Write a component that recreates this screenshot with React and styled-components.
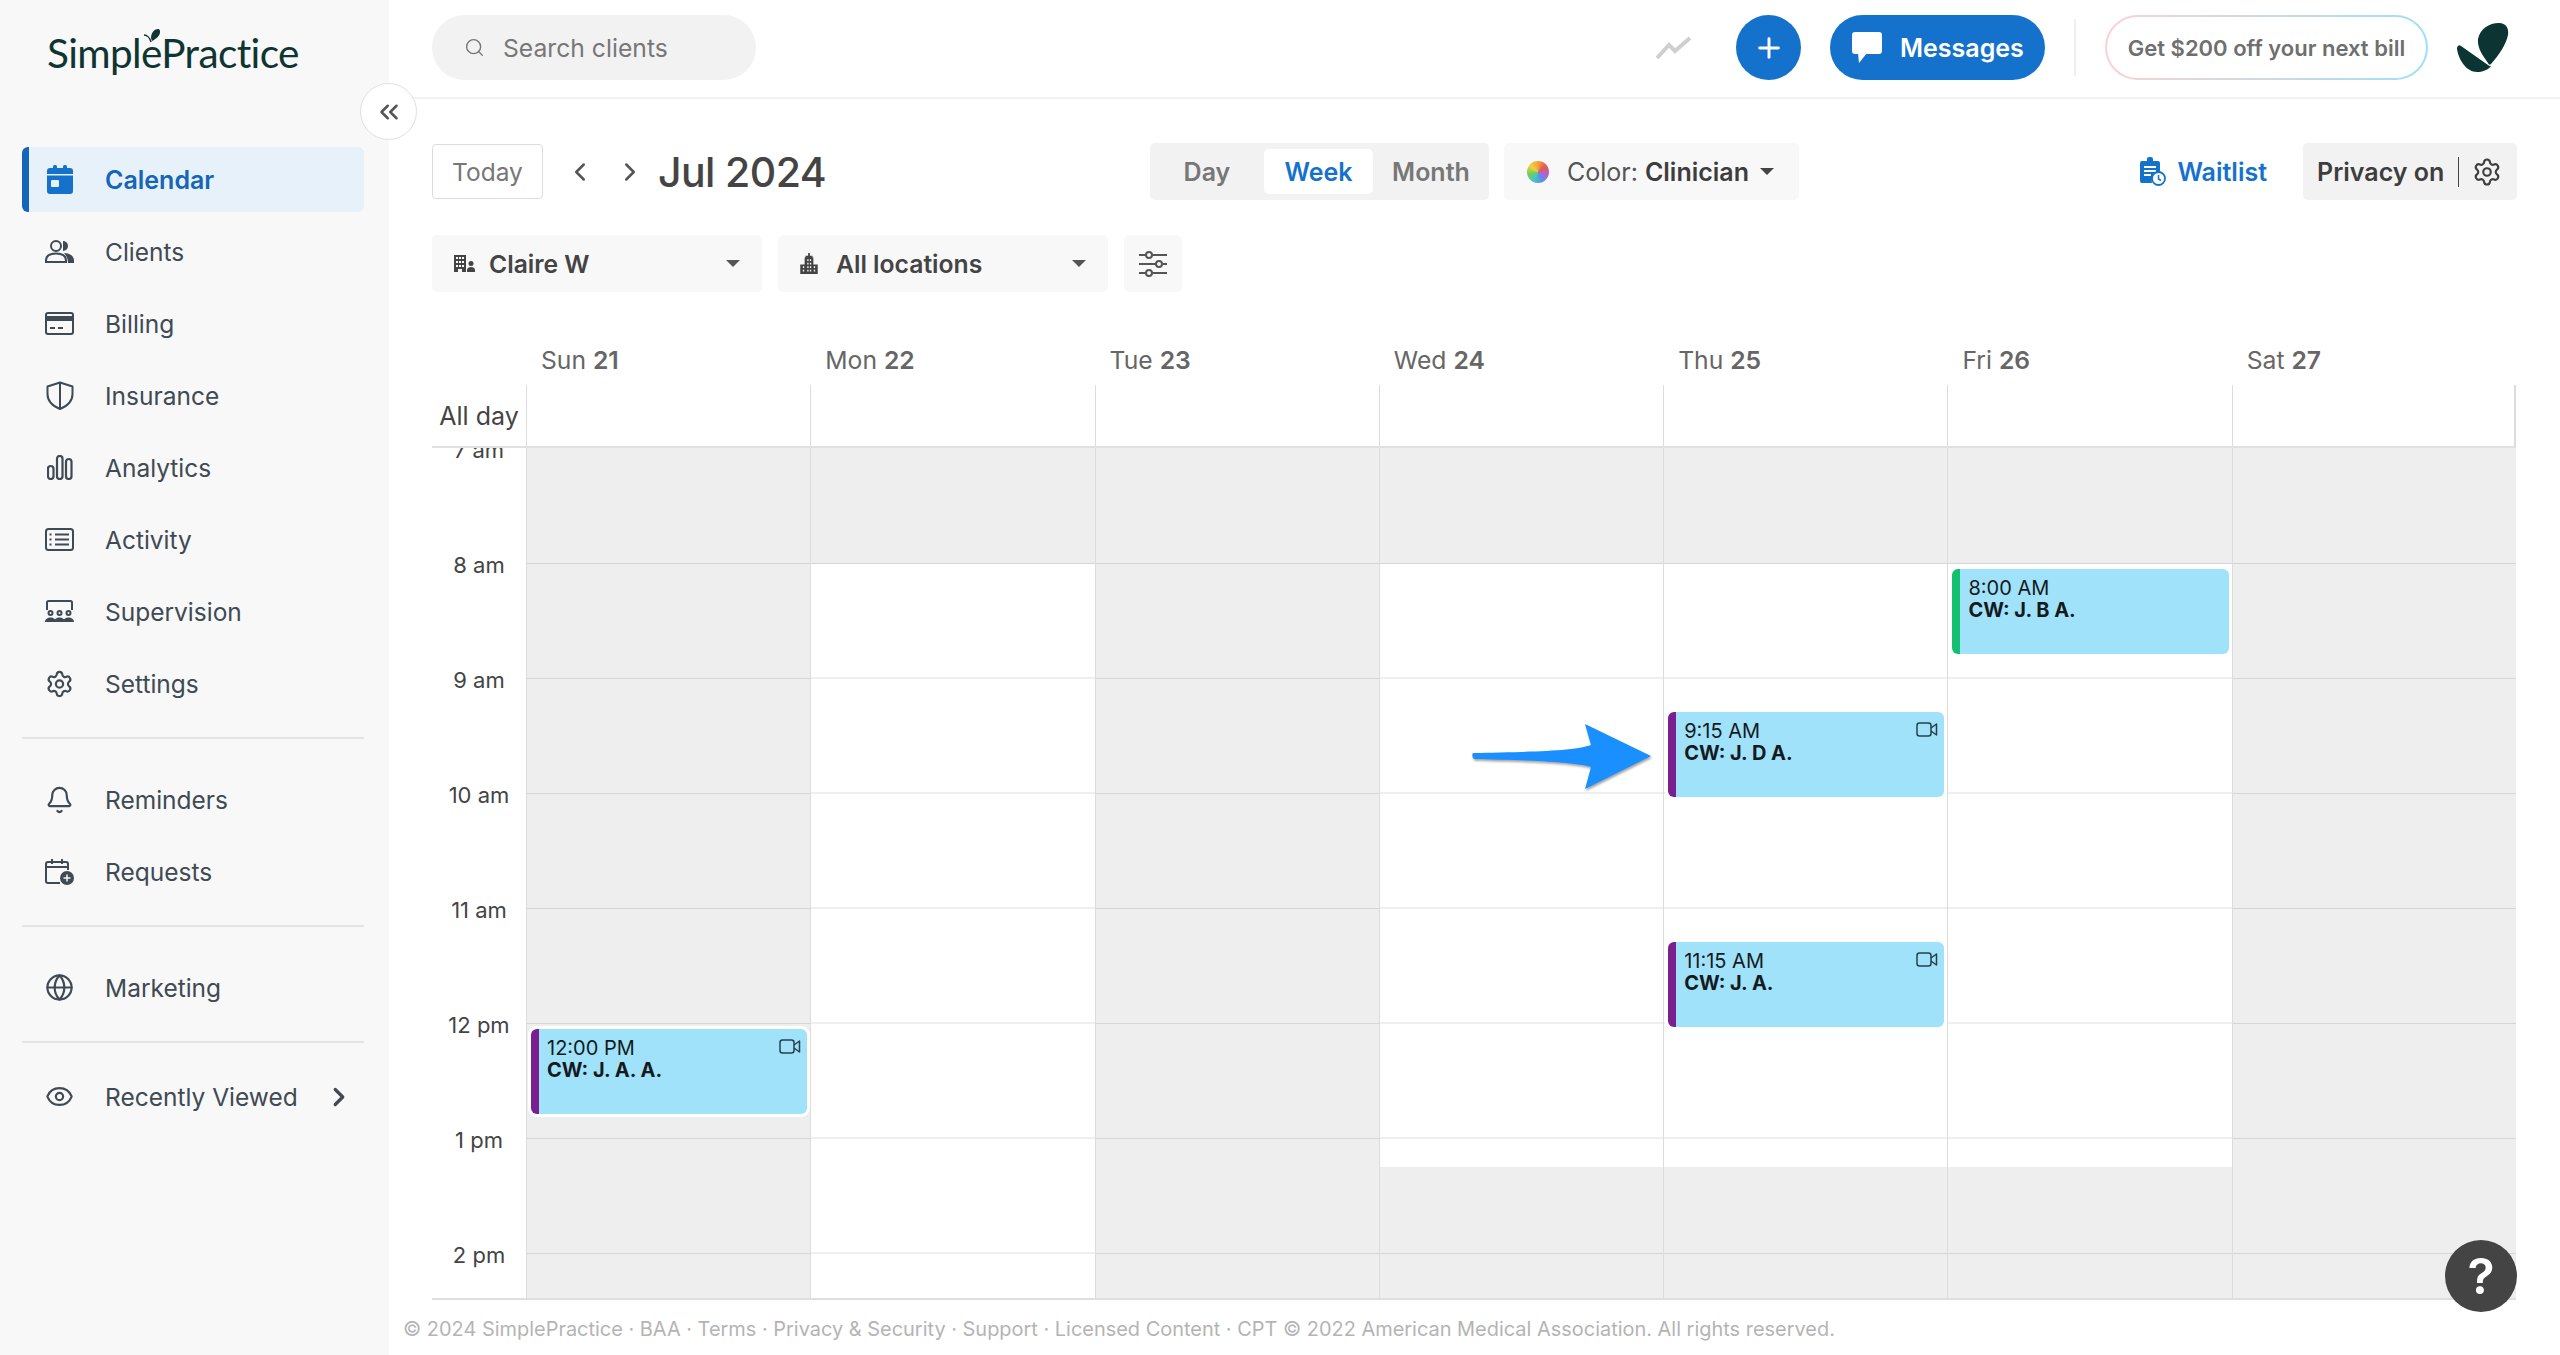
import React from "react";
import styled, { createGlobalStyle } from "styled-components";
import {
  Bell,
  ChevronLeft,
  ChevronRight,
  ChevronsLeft,
  Eye,
  Globe,
  Plus,
  Search,
  Settings,
} from "lucide-react";

const GlobalStyle = createGlobalStyle`
  html, body {
    margin: 0;
    padding: 0;
    height: 100%;
    background: #fff;
    font-family: Inter, "Liberation Sans", sans-serif;
  }
  * { box-sizing: border-box; }
`;

/* ---------- icons ---------- */
const CalendarIcon = () => (
  <svg width="26" height="29" viewBox="0 0 26 29" fill="#1572cc">
    <rect x="6" y="0" width="4" height="6" rx="1.5" />
    <rect x="16" y="0" width="4" height="6" rx="1.5" />
    <path d="M0 6a3 3 0 0 1 3-3h20a3 3 0 0 1 3 3v3H0z" />
    <path d="M0 10.500h26V26a3 3 0 0 1-3 3H3a3 3 0 0 1-3-3z" />
    <rect x="4" y="15" width="8" height="7" rx="1" fill="#e7f1fa" />
  </svg>
);
const ClientsIcon = () => (
  <svg width="29" height="23" viewBox="0 0 29 23" fill="none" stroke="#3f4a54" strokeWidth="2">
    <circle cx="11" cy="6" r="5" />
    <path d="M1 22v-1.500C1 16 5 13.500 11 13.500s10 2.500 10 7V22z" />
    <path d="M18 1a5 5 0 0 1 0 10z" fill="#3f4a54" stroke="none" />
    <path d="M19 13c5 0 10 2.500 10 7.500V23h-6c0-4-1.500-7.500-4-10z" fill="#3f4a54" stroke="none" />
  </svg>
);
const BillingIcon = () => (
  <svg width="29" height="23" viewBox="0 0 29 23" fill="none" stroke="#3f4a54" strokeWidth="2">
    <rect x="1" y="1" width="27" height="21" rx="2" />
    <rect x="1" y="4" width="27" height="5" fill="#3f4a54" stroke="none" />
    <path d="M5 16h5M13 16h5" />
  </svg>
);
const ShieldIcon = () => (
  <svg width="28" height="29" viewBox="0 0 28 29" fill="none" stroke="#3f4a54" strokeWidth="2">
    <path d="M14 1.500 26.500 5.500V13c0 7-5 12-12.500 15C6.500 25 1.500 20 1.500 13V5.500z" strokeLinejoin="round" />
    <path d="M14 1.500V28" />
  </svg>
);
const AnalyticsIcon = () => (
  <svg width="26" height="25" viewBox="0 0 26 25" fill="none" stroke="#3f4a54" strokeWidth="2.200">
    <rect x="1" y="11" width="5.500" height="13" rx="2.700" />
    <rect x="10" y="1" width="5.500" height="23" rx="2.700" />
    <rect x="19" y="4" width="5.500" height="20" rx="2.700" />
  </svg>
);
const ActivityIcon = () => (
  <svg width="29" height="23" viewBox="0 0 29 23" fill="none" stroke="#3f4a54" strokeWidth="2">
    <rect x="1" y="1" width="27" height="21" rx="2.500" />
    <path d="M10 6.500h14M10 11.500h14M10 16.500h14" />
    <path d="M4.500 6.500h2M4.500 11.500h2M4.500 16.500h2" />
  </svg>
);
const SupervisionIcon = () => (
  <svg width="29" height="23" viewBox="0 0 29 23" fill="none" stroke="#3f4a54" strokeWidth="2">
    <path d="M2 10V2.500A1.500 1.500 0 0 1 3.500 1h22A1.500 1.500 0 0 1 27 2.500V10" />
    <circle cx="5.500" cy="13" r="2" />
    <circle cx="14.500" cy="13" r="2" />
    <circle cx="23.500" cy="13" r="2" />
    <path d="M0 22c0-6 11-6 11 0zM9 22c0-6 11-6 11 0zM18 22c0-6 11-6 11 0z" fill="#3f4a54" stroke="none" />
  </svg>
);
const RequestsIcon = () => (
  <svg width="29" height="26" viewBox="0 0 29 26" fill="none" stroke="#3f4a54" strokeWidth="2">
    <path d="M7 0v5M17 0v5" />
    <path d="M15 24H3a2 2 0 0 1-2-2V5a2 2 0 0 1 2-2h18a2 2 0 0 1 2 2v6" />
    <path d="M1 8h22" />
    <circle cx="22" cy="19" r="7" fill="#3f4a54" stroke="none" />
    <path d="M22 15.500v7M18.500 19h7" stroke="#f8f8f8" strokeWidth="1.500" />
  </svg>
);
const VideoIcon = () => (
  <svg width="22" height="15" viewBox="0 0 22 15" fill="none" stroke="#27404d" strokeWidth="1.500">
    <rect x="1" y="1" width="14" height="13" rx="2.500" />
    <path d="M15 6 20.500 2V13L15 9" strokeLinejoin="round" />
  </svg>
);
const ChatIcon = () => (
  <svg width="30" height="31" viewBox="0 0 30 31" fill="#fff">
    <rect x="0" y="0" width="30" height="22" rx="3" />
    <path d="M6 21h9l-8 10z" />
  </svg>
);
const TrendIcon = () => (
  <svg width="36" height="24" viewBox="0 0 36 24" fill="none" stroke="#cfcfcf" strokeWidth="4">
    <path d="M1 22 13 9 19 15 34 2" />
  </svg>
);
const LogoMark = () => (
  <svg width="52" height="49" viewBox="0 0 52 49" fill="#0c3432">
    <path d="M21 16C23 6 32 0 42 0c7 0 10 5 9 12-2 9-8 19-17 29-1 1-2 1-3-1C26 33 20 25 21 16z" />
    <path d="M1 23c1-1 2-1 3 0l27 19c1 1 2 1 3 1-3 4-9 6-14 6C10 49 2 38 0 26c0-1 0-2 1-3z" />
  </svg>
);
const WaitlistIcon = () => (
  <svg width="26" height="29" viewBox="0 0 26 29">
    <path d="M2 4h5V2a2 2 0 0 1 2-2h2a2 2 0 0 1 2 2v2h5a2 2 0 0 1 2 2v10a8 8 0 0 0-8 10H2a2 2 0 0 1-2-2V6a2 2 0 0 1 2-2z" fill="#1572cc" />
    <path d="M4 10h12M4 14h12M4 18h7" stroke="#fff" strokeWidth="2" />
    <circle cx="18.500" cy="21.500" r="6.500" fill="#fff" stroke="#1572cc" strokeWidth="1.800" />
    <path d="M18.500 18v4l2.500 1.500" stroke="#1572cc" strokeWidth="1.500" fill="none" />
  </svg>
);
const BuildingUserIcon = () => (
  <svg width="21" height="17" viewBox="0 0 21 17" fill="#444">
    <path d="M0 0h12v17H8v-3H4v3H0z" />
    <path d="M2 2h2v2H2zM5 2h2v2H5zM8 2h2v2H8zM2 6h2v2H2zM5 6h2v2H5zM8 6h2v2H8zM2 10h2v2H2zM5 10h2v2H5zM8 10h2v2H8z" fill="#f8f8f8" />
    <circle cx="17" cy="8.500" r="2.500" />
    <path d="M13 17v-2c0-2 2-3 4-3s4 1 4 3v2z" />
  </svg>
);
const BuildingsIcon = () => (
  <svg width="18" height="21" viewBox="0 0 20 24" fill="#444">
    <path d="M6 5V3h3V0h2v3h3v2h1v8h5v11H0V13h5V5z" />
    <path d="M8 7h1.500v2H8zM11 7h1.500v2H11zM8 11h1.500v2H8zM11 11h1.500v2H11zM3 15h1.500v2H3zM8 15h1.500v2H8zM11 15h1.500v2H11zM15.500 15H17v2h-1.500zM3 19h1.500v2H3zM8 19h1.500v2H8zM11 19h1.500v2H11zM15.500 19H17v2h-1.500z" fill="#f8f8f8" />
  </svg>
);
const SlidersIcon = () => (
  <svg width="28" height="26" viewBox="0 0 28 26" fill="none" stroke="#555" strokeWidth="2">
    <path d="M0 4h7M13 4h15M0 13h17M23 13h5M0 22h7M13 22h15" />
    <circle cx="10" cy="4" r="3" />
    <circle cx="20" cy="13" r="3" />
    <circle cx="10" cy="22" r="3" />
  </svg>
);

/* ---------- sidebar ---------- */
const Page = styled.div`
  display: flex;
  width: 100%;
  height: 100vh;
  overflow: hidden;
  position: relative;
`;
const Sidebar = styled.aside`
  width: 389px;
  flex-shrink: 0;
  background: #f8f8f8;
  padding: 0 25px 0 22px;
  display: flex;
  flex-direction: column;
`;
const LogoWrap = styled.div`
  height: 147px;
  flex-shrink: 0;
  padding: 31px 0 0 25px;
`;
const Logo = styled.div`
  position: relative;
  display: inline-block;
  font-family: Lato, sans-serif;
  font-size: 40.500px;
  line-height: 44px;
  letter-spacing: -0.6px;
  color: #0f3533;
`;
const LogoLeaf = styled.svg`
  position: absolute;
  left: 97px;
  top: -2px;
`;
const Nav = styled.nav`
  display: flex;
  flex-direction: column;
  gap: 7px;
`;
const NavItem = styled.div`
  height: 65px;
  display: flex;
  align-items: center;
  padding-left: 23px;
  border-radius: 6px;
  font-size: ${(p) => (p.$active ? "25px" : "24.500px")};
  font-weight: ${(p) => (p.$active ? 600 : 400)};
  color: ${(p) => (p.$active ? "#1565b8" : "#3f4a54")};
  background: ${(p) => (p.$active ? "#e7f1fa" : "transparent")};
  border-left: ${(p) => (p.$active ? "7px solid #1565b8" : "none")};
  ${(p) => p.$active && "padding-left: 16px;"}
`;
const NavIconBox = styled.span`
  width: 29px;
  display: flex;
  justify-content: center;
  margin-right: 31px;
  flex-shrink: 0;
  color: #3f4a54;
`;
const NavChevron = styled.span`
  margin-left: auto;
  margin-right: 10px;
  display: flex;
  color: #3f4a54;
`;
const Divider = styled.div`
  height: 2px;
  background: #e4e4e4;
  margin: 14px 0 ${(p) => (p.$tail ? "14px" : "21px")};
`;
const CollapseBtn = styled.button`
  position: absolute;
  left: 360px;
  top: 83px;
  width: 57px;
  height: 57px;
  border-radius: 50%;
  background: #fff;
  border: 1px solid #e0e0e0;
  padding: 0;
  display: flex;
  align-items: center;
  justify-content: center;
  color: #555;
`;

/* ---------- main ---------- */
const Main = styled.main`
  flex: 1;
  min-width: 0;
  display: flex;
  flex-direction: column;
`;
const Topbar = styled.header`
  height: 99px;
  flex-shrink: 0;
  display: flex;
  align-items: flex-start;
  padding: 15px 51px 0 43px;
  border-bottom: 2px solid #f2f2f2;
`;
const SearchBox = styled.div`
  width: 324px;
  height: 65px;
  border-radius: 33px;
  background: #f2f2f2;
  display: flex;
  align-items: center;
  padding-left: 32px;
  gap: 18px;
  color: #777;
  font-size: 24.700px;
`;
const TopRight = styled.div`
  margin-left: auto;
  display: flex;
  align-items: center;
  height: 65px;
`;
const TrendWrap = styled.span`
  display: flex;
  margin-right: 44px;
`;
const RoundPlus = styled.div`
  width: 65px;
  height: 65px;
  border-radius: 50%;
  background: #1572cc;
  color: #fff;
  display: flex;
  align-items: center;
  justify-content: center;
`;
const MessagesBtn = styled.div`
  width: 215px;
  height: 65px;
  margin-left: 29px;
  border-radius: 33px;
  background: #1572cc;
  color: #fff;
  font-size: 25px;
  font-weight: 600;
  display: flex;
  align-items: center;
  padding-left: 22px;
  gap: 18px;
`;
const TopDivider = styled.div`
  width: 2px;
  height: 57px;
  background: #efefef;
  margin: 0 29px;
`;
const PromoBtn = styled.div`
  width: 323px;
  height: 65px;
  border-radius: 33px;
  border: 2px solid transparent;
  background: linear-gradient(#fff, #fff) padding-box,
    linear-gradient(90deg, #fbd2d2, #9fe0f6) border-box;
  color: #6f6f6f;
  font-size: 22px;
  font-weight: 600;
  display: flex;
  align-items: center;
  justify-content: center;
`;
const MarkWrap = styled.span`
  display: flex;
  margin-left: 29px;
`;

const Content = styled.div`
  flex: 1;
  min-height: 0;
  padding: 0 43px;
  display: flex;
  flex-direction: column;
`;
const ToolRow = styled.div`
  height: 57px;
  margin-top: 44px;
  display: flex;
  align-items: center;
  flex-shrink: 0;
`;
const TodayBtn = styled.div`
  width: 111px;
  height: 55px;
  border: 1px solid #dcdcdc;
  border-radius: 4px;
  display: flex;
  align-items: center;
  justify-content: center;
  font-size: 24.500px;
  color: #777;
`;
const ArrowBtn = styled.span`
  display: flex;
  color: #555;
  margin-left: ${(p) => p.$gap}px;
`;
const MonthTitle = styled.div`
  font-size: 41px;
  font-weight: 500;
  color: #444;
  margin-left: 13px;
  letter-spacing: -0.6px;
`;
const Segment = styled.div`
  width: 339px;
  height: 57px;
  margin-left: 324px;
  background: #f2f2f2;
  border-radius: 5px;
  display: flex;
  align-items: center;
`;
const SegItem = styled.div`
  height: 45px;
  width: ${(p) => p.$w}px;
  border-radius: 5px;
  display: flex;
  align-items: center;
  justify-content: center;
  font-size: 25px;
  font-weight: 600;
  color: ${(p) => (p.$active ? "#1572cc" : "#777")};
  background: ${(p) => (p.$active ? "#fff" : "transparent")};
`;
const ColorBtn = styled.div`
  width: 295px;
  height: 57px;
  margin-left: 15px;
  background: #f8f8f8;
  border-radius: 5px;
  display: flex;
  align-items: center;
  padding-left: 23px;
  font-size: 25px;
  color: #555;
`;
const ColorDot = styled.span`
  width: 22px;
  height: 22px;
  border-radius: 50%;
  margin-right: 18px;
  background: conic-gradient(#f2a33c, #e8574f, #b45fd0, #5a8fe6, #46c4c8, #6fcf5f, #f2d03c, #f2a33c);
`;
const Strong = styled.b`
  font-weight: 600;
  color: #3d3d3d;
  margin-left: 7px;
`;
const Caret = styled.span`
  width: 0;
  height: 0;
  border-left: 7px solid transparent;
  border-right: 7px solid transparent;
  border-top: 7px solid ${(p) => p.$color || "#444"};
  margin-left: ${(p) => (p.$auto ? "auto" : p.$ml + "px")};
  margin-right: ${(p) => p.$mr || 0}px;
`;
const WaitlistLink = styled.div`
  margin-left: auto;
  display: flex;
  align-items: center;
  gap: 11px;
  font-size: 25px;
  font-weight: 600;
  color: #1572cc;
`;
const PrivacyBtn = styled.div`
  width: 214px;
  height: 57px;
  margin-left: 36px;
  background: #f2f2f2;
  border-radius: 5px;
  display: flex;
  align-items: center;
  padding-left: 14px;
  font-size: 25px;
  font-weight: 600;
  color: #3d3d3d;
`;
const PrivacyRule = styled.span`
  width: 1px;
  height: 30px;
  background: #444;
  margin: 0 13px 0 14px;
`;
const FilterRow = styled.div`
  height: 57px;
  margin-top: 35px;
  display: flex;
  gap: 16px;
  flex-shrink: 0;
`;
const FilterSelect = styled.div`
  width: 330px;
  display: flex;
  align-items: center;
  background: #f8f8f8;
  border-radius: 5px;
  padding-left: 22px;
  font-size: 24.700px;
  font-weight: 600;
  color: #444;
`;
const FilterLabel = styled.span`
  margin-left: ${(p) => p.$ml}px;
`;
const FilterBtn = styled.div`
  width: 58px;
  display: flex;
  align-items: center;
  justify-content: center;
  background: #f8f8f8;
  border-radius: 5px;
`;

/* ---------- calendar ---------- */
const DayHeader = styled.div`
  display: grid;
  grid-template-columns: 94px repeat(7, 1fr);
  height: 93px;
  align-items: center;
  flex-shrink: 0;
  padding-top: 42px;
  margin-right: 1px;
`;
const DayLabel = styled.div`
  padding-left: 15px;
  font-size: 24.700px;
  color: #666;
  & b {
    font-weight: 600;
  }
`;
const AllDayRow = styled.div`
  display: grid;
  grid-template-columns: 94px repeat(7, 1fr);
  height: 63px;
  flex-shrink: 0;
  border-bottom: 2px solid #e0e0e0;
  margin-right: 1px;
`;
const AllDayLabel = styled.div`
  display: flex;
  align-items: center;
  justify-content: center;
  font-size: 25px;
  color: #444;
`;
const AllDayCell = styled.div`
  border-left: 1px solid #dcdcdc;
  &:last-child {
    border-right: 2px solid #dcdcdc;
  }
`;
const GridBody = styled.div`
  position: relative;
  display: grid;
  grid-template-columns: 94px repeat(7, 1fr);
  height: 852px;
  flex-shrink: 0;
  overflow: hidden;
  border-bottom: 2px solid #dedede;
  margin-right: 1px;
`;
const Gutter = styled.div`
  margin-top: -56px;
`;
const TimeLabel = styled.div`
  height: 115px;
  display: flex;
  align-items: center;
  justify-content: center;
  font-size: 22px;
  color: #444;
`;
const DayColumn = styled.div`
  position: relative;
  padding-top: 1px;
  border-left: 1px solid #dcdcdc;
  &:last-child {
    border-right: 2px solid #dcdcdc;
  }
  background: ${(p) =>
    p.$open
      ? `linear-gradient(#eee 0 ${p.$open[0]}px, #fff ${p.$open[0]}px ${p.$open[1]}px, #eee ${p.$open[1]}px)`
      : "#eee"};
`;
const HourCell = styled.div`
  height: 115px;
  border-bottom: ${(p) => (p.$light ? "2px solid #efefef" : "1px solid #d6d6d6")};
`;
const EventCard = styled.div`
  position: absolute;
  left: 4px;
  right: 3px;
  top: ${(p) => p.$top}px;
  height: 85px;
  display: flex;
  border-radius: 6px;
  background: #9fe2fa;
  border-left: 8px solid ${(p) => p.$accent};
  box-shadow: 0 0 0 3px #fff;
  padding: 8px 6px 0 8px;
  color: #151a1d;
  font-size: 20px;
  line-height: 22px;
  overflow: hidden;
`;
const EventText = styled.div`
  flex: 1;
`;
const EventName = styled.div`
  font-weight: 700;
`;
const EventVideo = styled.span`
  display: flex;
  margin-top: 2px;
`;
const BlueArrow = styled.svg`
  position: absolute;
  left: 1040px;
  top: 276px;
  filter: drop-shadow(1px 2px 1px rgba(0, 0, 0, 0.35));
  overflow: visible;
`;
const Footer = styled.footer`
  margin-left: -29px;
  padding-top: 17px;
  font-size: 19.950px;
  color: #b4b4b4;
  white-space: nowrap;
`;
const HelpBtn = styled.div`
  position: absolute;
  left: 2445px;
  top: 1240px;
  width: 72px;
  height: 72px;
  border-radius: 50%;
  background: #444;
  color: #fff;
  font-size: 50px;
  font-weight: 600;
  display: flex;
  align-items: center;
  justify-content: center;
`;

const navGroups = [
  [
    { label: "Calendar", icon: <CalendarIcon />, active: true },
    { label: "Clients", icon: <ClientsIcon /> },
    { label: "Billing", icon: <BillingIcon /> },
    { label: "Insurance", icon: <ShieldIcon /> },
    { label: "Analytics", icon: <AnalyticsIcon /> },
    { label: "Activity", icon: <ActivityIcon /> },
    { label: "Supervision", icon: <SupervisionIcon /> },
    { label: "Settings", icon: <Settings size={30} strokeWidth={1.8} /> },
  ],
  [
    { label: "Reminders", icon: <Bell size={30} strokeWidth={1.8} /> },
    { label: "Requests", icon: <RequestsIcon /> },
  ],
  [{ label: "Marketing", icon: <Globe size={31} strokeWidth={1.8} /> }],
];

const days = [
  { name: "Sun", num: 21, events: [{ top: 581, time: "12:00 PM", who: "CW: J. A. A.", accent: "#7a1f8f", video: true }] },
  { name: "Mon", num: 22, open: [116, 852] },
  { name: "Tue", num: 23 },
  { name: "Wed", num: 24, open: [116, 719] },
  {
    name: "Thu",
    num: 25,
    open: [116, 719],
    events: [
      { top: 264, time: "9:15 AM", who: "CW: J. D A.", accent: "#7a1f8f", video: true },
      { top: 494, time: "11:15 AM", who: "CW: J. A.", accent: "#7a1f8f", video: true },
    ],
  },
  {
    name: "Fri",
    num: 26,
    open: [116, 719],
    events: [{ top: 121, time: "8:00 AM", who: "CW: J. B A.", accent: "#12c06f" }],
  },
  { name: "Sat", num: 27 },
];

const hours = ["7 am", "8 am", "9 am", "10 am", "11 am", "12 pm", "1 pm", "2 pm"];

export default function App() {
  return (
    <Page>
      <GlobalStyle />
      <Sidebar>
        <LogoWrap>
          <Logo>
            SimplePractice
            <LogoLeaf width="16" height="14" viewBox="0 0 16 14" fill="#0f3533">
              <path d="M7 9C7 4 10 0 14 0c2 0 2 2 2 3 0 4-4 7-8 9z" />
              <path d="M0 6c3 0 6 3 7 7" fill="none" stroke="#0f3533" strokeWidth="1.500" />
            </LogoLeaf>
          </Logo>
        </LogoWrap>
        <Nav>
          {navGroups.map((group, i) => (
            <React.Fragment key={i}>
              {group.map((item) => (
                <NavItem key={item.label} $active={item.active}>
                  <NavIconBox>{item.icon}</NavIconBox>
                  {item.label}
                </NavItem>
              ))}
              <Divider $tail={i === navGroups.length - 1} />
            </React.Fragment>
          ))}
          <NavItem>
            <NavIconBox>
              <Eye size={31} strokeWidth={1.8} />
            </NavIconBox>
            Recently Viewed
            <NavChevron>
              <ChevronRight size={30} strokeWidth={2.6} />
            </NavChevron>
          </NavItem>
        </Nav>
      </Sidebar>
      <CollapseBtn>
        <ChevronsLeft size={30} strokeWidth={2} />
      </CollapseBtn>

      <Main>
        <Topbar>
          <SearchBox>
            <Search size={21} strokeWidth={1.6} />
            Search clients
          </SearchBox>
          <TopRight>
            <TrendWrap>
              <TrendIcon />
            </TrendWrap>
            <RoundPlus>
              <Plus size={32} strokeWidth={2.2} />
            </RoundPlus>
            <MessagesBtn>
              <ChatIcon />
              Messages
            </MessagesBtn>
            <TopDivider />
            <PromoBtn>Get $200 off your next bill</PromoBtn>
            <MarkWrap>
              <LogoMark />
            </MarkWrap>
          </TopRight>
        </Topbar>

        <Content>
          <ToolRow>
            <TodayBtn>Today</TodayBtn>
            <ArrowBtn $gap={22}>
              <ChevronLeft size={30} strokeWidth={2} />
            </ArrowBtn>
            <ArrowBtn $gap={20}>
              <ChevronRight size={30} strokeWidth={2} />
            </ArrowBtn>
            <MonthTitle>Jul 2024</MonthTitle>
            <Segment>
              <SegItem $w={114}>Day</SegItem>
              <SegItem $w={109} $active>
                Week
              </SegItem>
              <SegItem $w={116}>Month</SegItem>
            </Segment>
            <ColorBtn>
              <ColorDot />
              Color:<Strong>Clinician</Strong>
              <Caret $ml={11} />
            </ColorBtn>
            <WaitlistLink>
              <WaitlistIcon />
              Waitlist
            </WaitlistLink>
            <PrivacyBtn>
              Privacy on
              <PrivacyRule />
              <Settings size={30} strokeWidth={1.7} />
            </PrivacyBtn>
          </ToolRow>

          <FilterRow>
            <FilterSelect>
              <BuildingUserIcon />
              <FilterLabel $ml={14}>Claire W</FilterLabel>
              <Caret $auto $color="#555" $mr={22} />
            </FilterSelect>
            <FilterSelect>
              <BuildingsIcon />
              <FilterLabel $ml={18}>All locations</FilterLabel>
              <Caret $auto $color="#555" $mr={22} />
            </FilterSelect>
            <FilterBtn>
              <SlidersIcon />
            </FilterBtn>
          </FilterRow>

          <DayHeader>
            <span />
            {days.map((d) => (
              <DayLabel key={d.name}>
                {d.name} <b>{d.num}</b>
              </DayLabel>
            ))}
          </DayHeader>

          <AllDayRow>
            <AllDayLabel>All day</AllDayLabel>
            {days.map((d) => (
              <AllDayCell key={d.name} />
            ))}
          </AllDayRow>

          <GridBody>
            <Gutter>
              {hours.map((h) => (
                <TimeLabel key={h}>{h}</TimeLabel>
              ))}
            </Gutter>
            {days.map((d) => (
              <DayColumn key={d.name} $open={d.open}>
                {hours.map((h, i) => (
                  <HourCell
                    key={h}
                    $light={d.open && (i + 1) * 115 > d.open[0] && (i + 1) * 115 < d.open[1]}
                  />
                ))}
                {(d.events || []).map((e) => (
                  <EventCard key={e.time} $top={e.top} $accent={e.accent}>
                    <EventText>
                      <div>{e.time}</div>
                      <EventName>{e.who}</EventName>
                    </EventText>
                    {e.video && (
                      <EventVideo>
                        <VideoIcon />
                      </EventVideo>
                    )}
                  </EventCard>
                ))}
              </DayColumn>
            ))}
            <BlueArrow width="180" height="66" viewBox="0 0 180 66" fill="#1a8fff">
              <path d="M1 29C40 28 100 28 119 21L113 0 179 32 113 65 119 43C100 37 40 36 2 35 0 34 0 30 1 29z" />
            </BlueArrow>
          </GridBody>

          <Footer>
            © 2024 SimplePractice · BAA · Terms · Privacy &amp; Security · Support · Licensed Content · CPT © 2022 American Medical Association. All rights reserved.
          </Footer>
        </Content>
      </Main>
      <HelpBtn>?</HelpBtn>
    </Page>
  );
}
